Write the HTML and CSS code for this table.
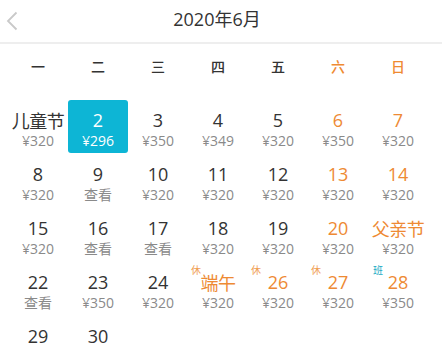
FILE: index.html
```html
<!DOCTYPE html>
<html lang="zh">
<head>
<meta charset="utf-8">
<link rel="stylesheet" href="styles.css">
</head>
<body>
<div class="page">
  <header class="header">
    <div class="back">
      <svg width="12" height="20" viewBox="0 0 12 20"><polyline points="10.5,1.5 2,10 10.5,18.5" fill="none" stroke="#c9c9c9" stroke-width="1.8"/></svg>
    </div>
    <div class="title">2020年6月</div>
    <div></div>
  </header>
  <div class="weekdays">
    <span>一</span><span>二</span><span>三</span><span>四</span><span>五</span><span class="we">六</span><span class="we">日</span>
  </div>
  <div class="grid">
    <div class="cell"><div class="num label">儿童节</div><div class="price">¥320</div></div>
    <div class="cell sel"><div class="num">2</div><div class="price">¥296</div></div>
    <div class="cell"><div class="num">3</div><div class="price">¥350</div></div>
    <div class="cell"><div class="num">4</div><div class="price">¥349</div></div>
    <div class="cell"><div class="num">5</div><div class="price">¥320</div></div>
    <div class="cell hol"><div class="num">6</div><div class="price">¥350</div></div>
    <div class="cell hol"><div class="num">7</div><div class="price">¥320</div></div>

    <div class="cell"><div class="num">8</div><div class="price">¥320</div></div>
    <div class="cell"><div class="num">9</div><div class="price">查看</div></div>
    <div class="cell"><div class="num">10</div><div class="price">¥320</div></div>
    <div class="cell"><div class="num">11</div><div class="price">¥320</div></div>
    <div class="cell"><div class="num">12</div><div class="price">¥320</div></div>
    <div class="cell hol"><div class="num">13</div><div class="price">¥320</div></div>
    <div class="cell hol"><div class="num">14</div><div class="price">¥320</div></div>

    <div class="cell"><div class="num">15</div><div class="price">¥320</div></div>
    <div class="cell"><div class="num">16</div><div class="price">查看</div></div>
    <div class="cell"><div class="num">17</div><div class="price">查看</div></div>
    <div class="cell"><div class="num">18</div><div class="price">¥320</div></div>
    <div class="cell"><div class="num">19</div><div class="price">¥320</div></div>
    <div class="cell hol"><div class="num">20</div><div class="price">¥320</div></div>
    <div class="cell hol"><div class="num label">父亲节</div><div class="price">¥320</div></div>

    <div class="cell"><div class="num">22</div><div class="price">查看</div></div>
    <div class="cell"><div class="num">23</div><div class="price">¥350</div></div>
    <div class="cell"><div class="num">24</div><div class="price">¥320</div></div>
    <div class="cell hol"><span class="badge rest">休</span><div class="num label">端午</div><div class="price">¥320</div></div>
    <div class="cell hol"><span class="badge rest">休</span><div class="num">26</div><div class="price">¥320</div></div>
    <div class="cell hol"><span class="badge rest">休</span><div class="num">27</div><div class="price">¥320</div></div>
    <div class="cell hol"><span class="badge work">班</span><div class="num">28</div><div class="price">¥350</div></div>

    <div class="cell"><div class="num">29</div></div>
    <div class="cell"><div class="num">30</div></div>
  </div>
</div>
</body>
</html>
```
FILE: styles.css
```css
* { box-sizing: border-box; }
html, body { margin: 0; padding: 0; background: #fff; }
body {
  font-family: "Open Sans", "Noto Sans CJK SC", sans-serif;
  color: #333;
}
.page {
  width: 442px;
  height: 350px;
  overflow: hidden;
}
.header {
  display: grid;
  grid-template-columns: 1fr auto 1fr;
  align-items: center;
  height: 44px;
  padding-right: 8px;
  border-bottom: 2px solid #eeeeee;
}
.back {
  padding-left: 6px;
  height: 38px;
  display: flex;
  align-items: center;
}
.back svg { display: block; }
.title {
  font-size: 18px;
  line-height: 38px;
  height: 42px;
  color: #333;
}
.weekdays {
  display: grid;
  grid-template-columns: repeat(7, 60px);
  margin-left: 8px;
  height: 44px;
  align-items: center;
  font-family: "Noto Sans CJK SC", sans-serif;
  font-size: 14px;
  font-weight: 500;
  color: #333;
  text-align: center;
}
.weekdays .we { color: #ef8a32; }
.grid {
  display: grid;
  grid-template-columns: repeat(7, 60px);
  grid-auto-rows: 53px;
  row-gap: 1px;
  margin-left: 8px;
  margin-top: 12px;
}
.cell {
  position: relative;
  text-align: center;
  padding-top: 9px;
  border-radius: 3px;
}
.num {
  font-size: 18px;
  line-height: 22px;
  color: #333;
}
.label {
  font-family: "Noto Sans CJK SC", sans-serif;
  font-size: 18px;
  letter-spacing: -0.5px;
}
.price {
  font-size: 14px;
  line-height: 20px;
  color: #8a8a8a;
}
.hol .num { color: #ee8a34; }
.sel { background: #0db5d5; }
.sel .num, .sel .price { color: #fff; }
.badge {
  position: absolute;
  top: 2px;
  left: 3px;
  font-family: "Noto Sans CJK SC", sans-serif;
  font-size: 10px;
  line-height: 12px;
}
.rest { color: #f0a055; }
.work { color: #18aac4; left: 5px; }
```
